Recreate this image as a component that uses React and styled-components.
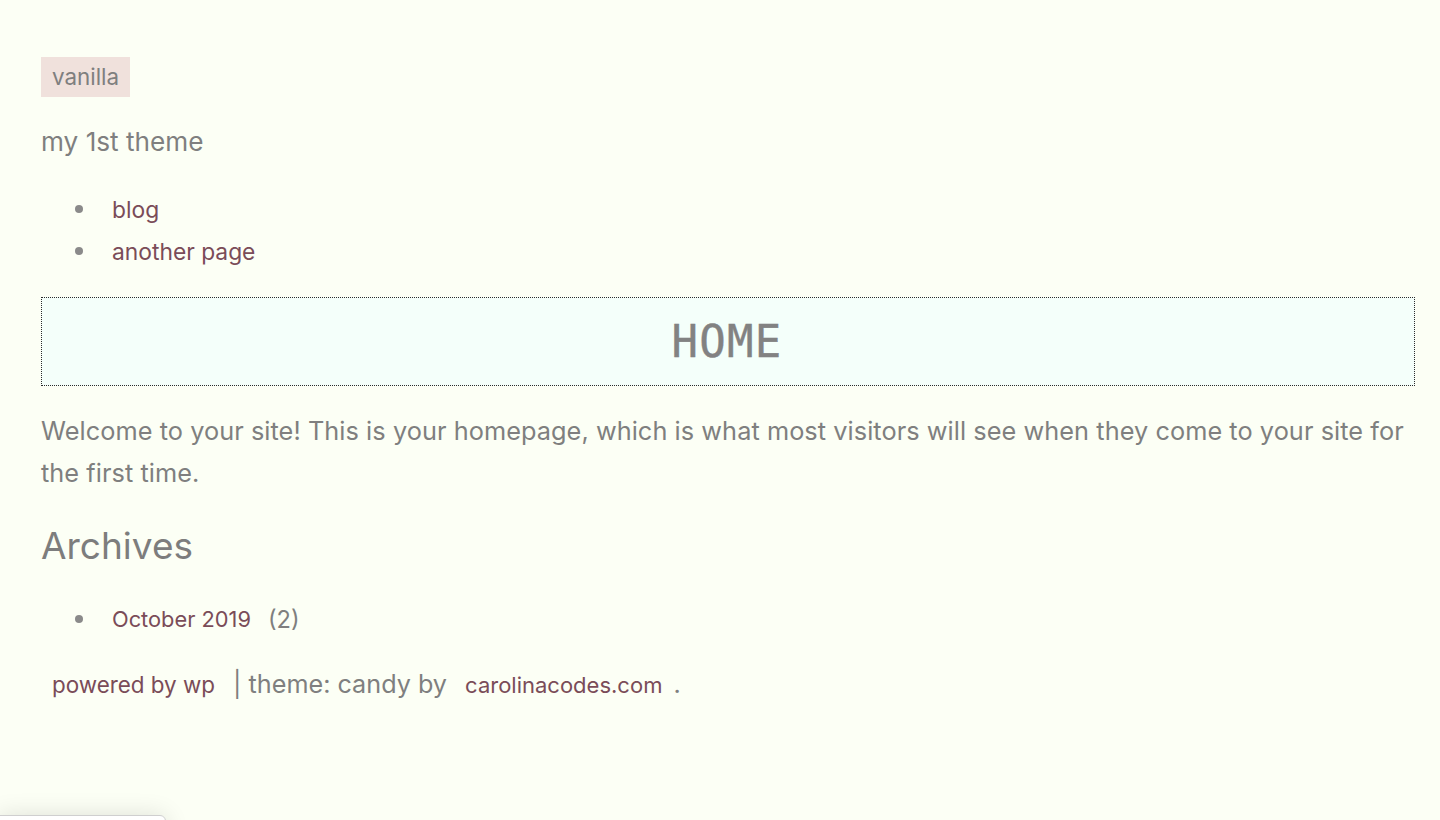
import React from 'react'
import styled, { createGlobalStyle } from 'styled-components'

const Global = createGlobalStyle`
  body {
    margin: 0;
    background: #fcfff5;
    color: #7f7f7f;
    font-family: "Inter", "Noto Sans", sans-serif;
  }
`

const Page = styled.div`
  padding: 57px 25px 60px 41px;
`

const Badge = styled.a`
  display: inline-block;
  background: #f0e1dc;
  color: #7f7f7f;
  font-size: 22.4px;
  line-height: 24px;
  padding: 8px 11px;
  text-decoration: none;
`

const Tagline = styled.p`
  margin: 24px 0 0;
  font-size: 26.2px;
  line-height: 42px;
`

const List = styled.ul`
  list-style: none;
  margin: ${p => p.$top}px 0 0;
  padding: 0 0 0 34px;
`

const Item = styled.li`
  display: flex;
  align-items: center;
  height: 42px;
  &::before {
    content: '';
    width: 8px;
    height: 8px;
    border-radius: 50%;
    background: #8a8a8a;
    margin-right: 18px;
  }
`

const Link = styled.a`
  color: #7a4c58;
  text-decoration: none;
  font-size: ${p => p.$size || 22.8}px;
  padding: 0 11px;
`

const Count = styled.span`
  font-size: 23.6px;
  margin-left: 6px;
`

const TitleBox = styled.div`
  margin-top: 25px;
  height: 87px;
  border: 1px dotted #2b2b2b;
  background: #f4fffa;
  display: flex;
  align-items: center;
  justify-content: center;
`

const Title = styled.h1`
  margin: 0 0 0 -2px;
  font-family: "DejaVu Sans Mono", monospace;
  font-weight: normal;
  font-size: 44px;
  letter-spacing: 1.2px;
  color: #828282;
  -webkit-text-stroke: 0.4px #828282;
`

const Text = styled.p`
  margin: 24px 0 0;
  font-size: 25.3px;
  letter-spacing: 0.06px;
  line-height: 42px;
`

const Heading = styled.h2`
  margin: 27px 0 0;
  font-size: 37px;
  font-weight: normal;
  line-height: 50px;
  color: #7d7d7d;
`

const Footer = styled.footer`
  margin-top: 23px;
  line-height: 42px;
  font-size: 25.2px;
  white-space: nowrap;
`

const Peek = styled.div`
  position: fixed;
  left: -2px;
  bottom: -40px;
  width: 166px;
  height: 43px;
  background: #fff;
  border: 1px solid #cfcfcf;
  border-radius: 0 6px 0 0;
  box-shadow: 0 0 24px rgba(0, 0, 0, 0.12);
`

export default function App() {
  return (
    <>
      <Global />
      <Page>
        <header>
          <Badge href="#">vanilla</Badge>
          <Tagline>my 1st theme</Tagline>
          <nav>
            <List $top={25}>
              <Item><Link href="#">blog</Link></Item>
              <Item><Link href="#">another page</Link></Item>
            </List>
          </nav>
        </header>
        <main>
          <TitleBox>
            <Title>HOME</Title>
          </TitleBox>
          <Text>
            Welcome to your site! This is your homepage, which is what most visitors will see when they come to your site for the first time.
          </Text>
          <Heading>Archives</Heading>
          <List $top={27}>
            <Item>
              <Link href="#" $size={21.8}>October 2019</Link>
              <Count>(2)</Count>
            </Item>
          </List>
        </main>
        <Footer>
          <Link href="#" $size={22.4}>powered by wp</Link>
          {' '}| theme: candy by{' '}
          <Link href="#" $size={22}>carolinacodes.com</Link>.
        </Footer>
      </Page>
      <Peek />
    </>
  )
}
